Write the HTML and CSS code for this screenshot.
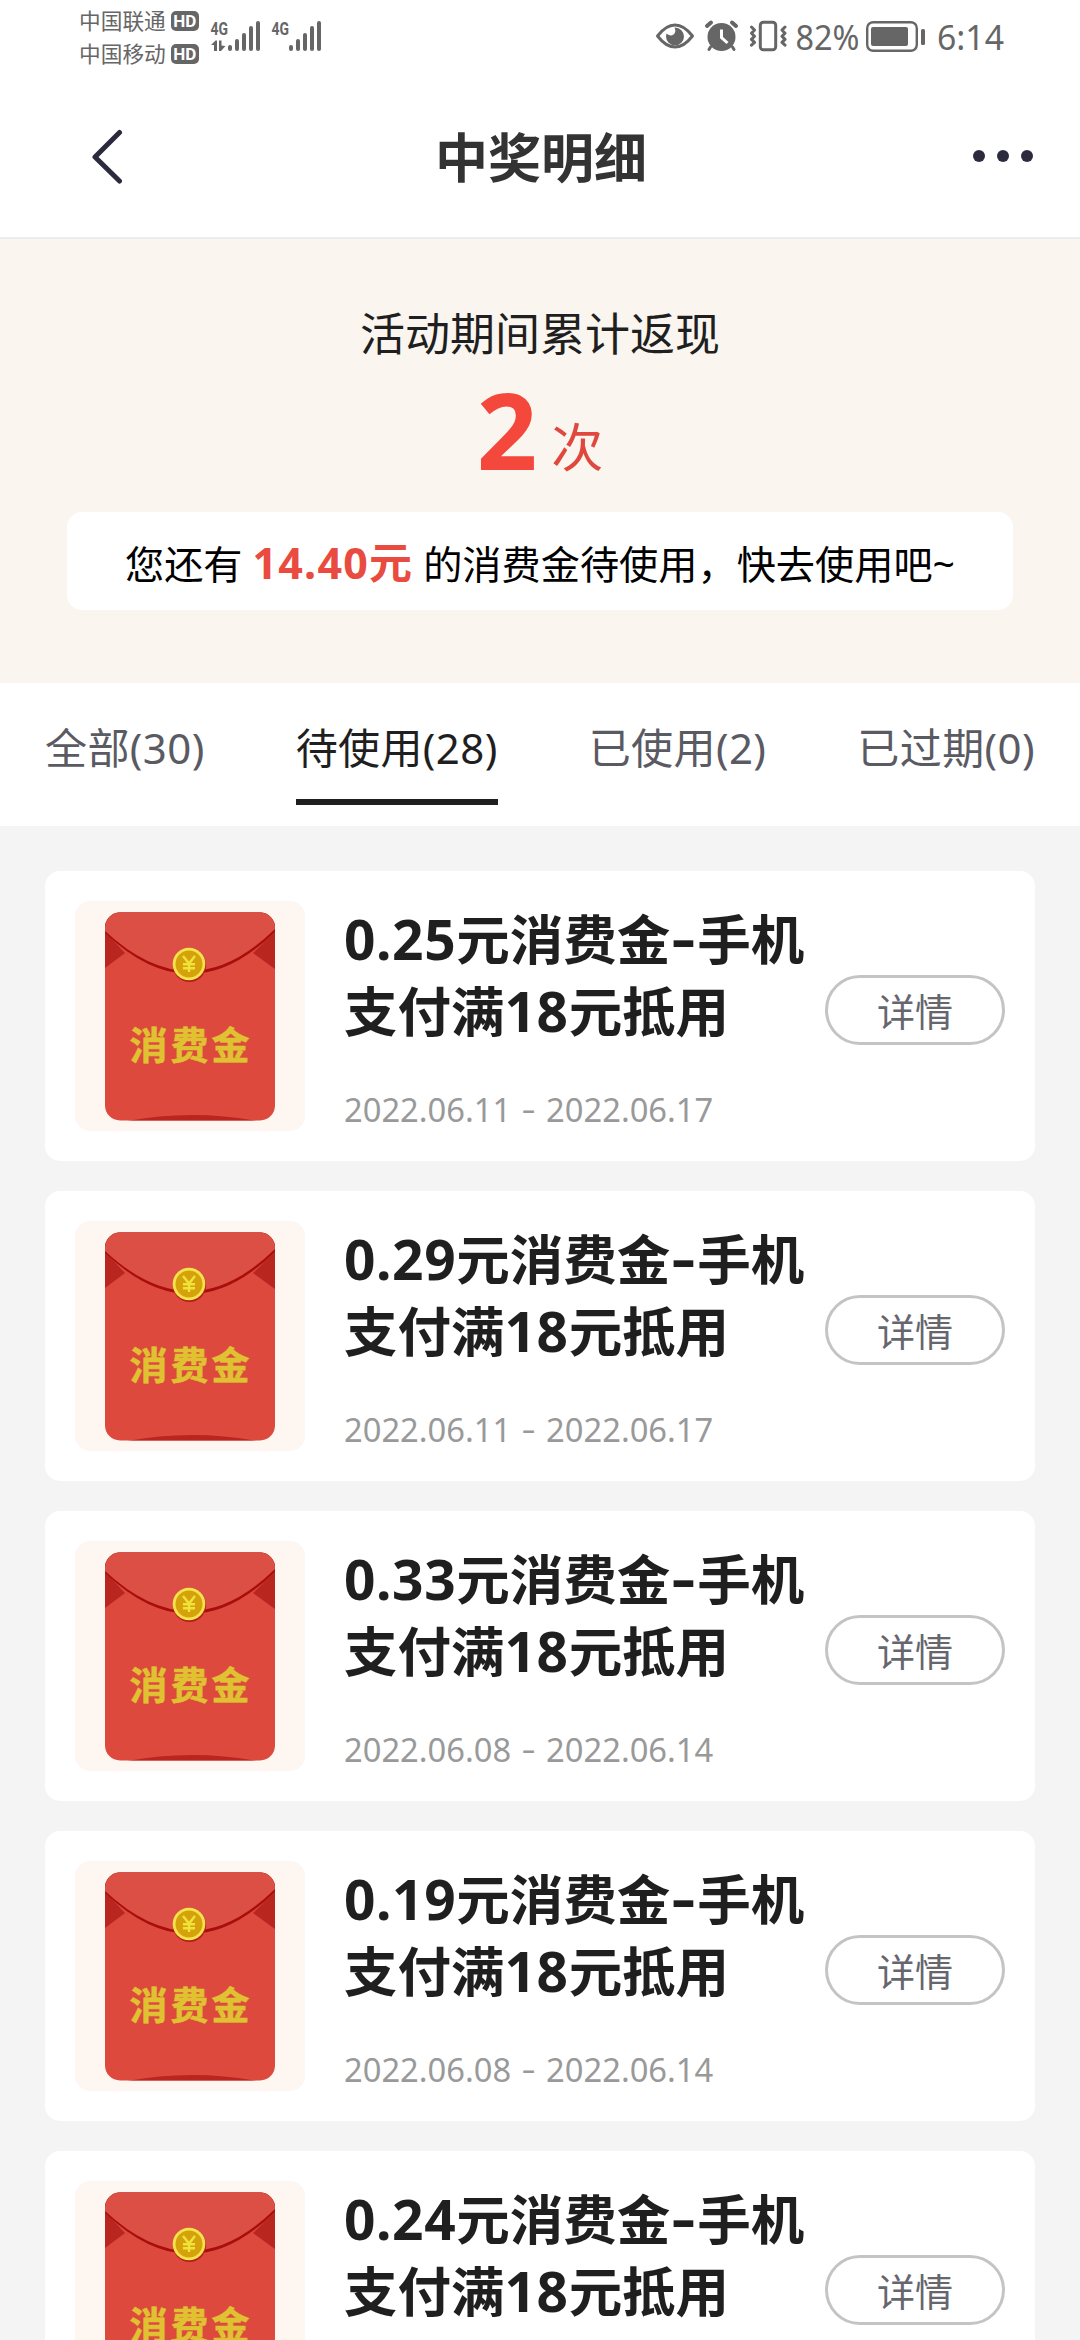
FILE: index.html
```html
<!DOCTYPE html>
<html lang="zh-CN">
<head>
<meta charset="utf-8">
<title>中奖明细</title>
<link rel="stylesheet" href="styles.css">
</head>
<body>
<svg class="defs" width="0" height="0" aria-hidden="true">
  <defs>
    <clipPath id="envelope-clip"><rect x="30" y="11.5" width="170" height="208" rx="15"/></clipPath>
    <symbol id="envelope" viewBox="0 0 230 230">
      <g clip-path="url(#envelope-clip)">
        <rect x="30" y="11" width="170" height="209" fill="#dd493d"/>
        <path d="M30 31L50 52L30 67ZM200 31L178 52L200 68Z" fill="#b9261f"/>
        <path d="M30 8V32Q73 73 115 73T200 31V8Z" fill="#a80f0c"/>
        <path d="M30 8V30Q73 70 115 70T200 28V8Z" fill="#dc4f44"/>
        <path d="M52 220Q117 208 182 220Z" fill="#b9261f"/>
      </g>
      <circle cx="114.500" cy="64.500" r="16.500" fill="#b02015"/>
      <circle cx="114" cy="63" r="16.300" fill="#f3e34d"/>
      <circle cx="114" cy="63" r="13.500" fill="#d5a20c"/>
      <path d="M108 55l6 7.500 6-7.500M114 62.500v8.500M108 63.300h12M108 67.300h12" fill="none" stroke="#f0e23c" stroke-width="2.400"/>
      <text class="envelope-text" x="54.500" y="157.500">消费金</text>
    </symbol>
  </defs>
</svg>

<div class="status">
  <div class="carriers">
    <div class="carrier">中国联通<span class="hd">HD</span></div>
    <div class="carrier">中国移动<span class="hd">HD</span></div>
  </div>
  <svg class="signals" width="114" height="75" viewBox="210 0 114 75">
    <g fill="#666">
      <text class="net" x="210.500" y="34.500" textLength="17.500" lengthAdjust="spacingAndGlyphs">4G</text>
      <text class="net" x="271.500" y="34.500" textLength="17.500" lengthAdjust="spacingAndGlyphs">4G</text>
      <path d="M211 45l4.500-4.500h1.500V51h-3v-6zM219 40.500h2.500v5l4 .5-4.500 5h-2z"/>
      <rect x="228" y="45" width="4" height="6" rx="2"/><rect x="235" y="39" width="4" height="12" rx="2"/><rect x="242" y="33" width="4" height="18" rx="2"/><rect x="249" y="26" width="4" height="25" rx="2"/><rect x="256" y="21" width="4" height="30" rx="2"/>
      <rect x="289" y="45" width="4" height="6" rx="2"/><rect x="296" y="39" width="4" height="12" rx="2"/><rect x="303" y="33" width="4" height="18" rx="2"/><rect x="310" y="26" width="4" height="25" rx="2"/><rect x="317" y="21" width="4" height="30" rx="2"/>
    </g>
  </svg>
  <svg class="indicators" width="360" height="75" viewBox="650 0 360 75">
    <g fill="none" stroke="#666" stroke-width="3" stroke-linecap="round" stroke-linejoin="round">
      <path d="M657.500 36Q666 25 675 25T692.500 36Q684 47 675 47T657.500 36Z"/>
      <path d="M707 26l4-3.500M736 26l-4-3.500" stroke-width="4"/>
      <path d="M710.500 47l-1.500 2.500M732.500 47l1.500 2.500"/>
      <rect x="760.300" y="22.300" width="15.400" height="27.400" rx="3"/>
      <path d="M751.500 27l3 3-3 3.200 3 3-3 3.200 3 3-3 2.800M785 27l-3 3 3 3.200-3 3 3 3.200-3 3 3 2.800"/>
      <rect x="867.200" y="22.200" width="49.600" height="28.600" rx="6" stroke-width="2.400"/>
    </g>
    <g fill="#666">
      <path d="M675 27.500a9 9 0 1 1-9 9l.5-3q4 3.500 7 1t1-7z"/>
      <circle cx="721.500" cy="37" r="14"/>
      <rect x="871" y="27" width="37" height="19" rx="2"/>
      <rect x="921" y="29" width="4" height="16" rx="1.500"/>
      <text class="readout" x="795.500" y="50" textLength="64" lengthAdjust="spacingAndGlyphs">82%</text>
      <text class="readout" x="937" y="50" textLength="67" lengthAdjust="spacingAndGlyphs">6:14</text>
    </g>
    <path d="M721.500 29.500v8l6 5.500" fill="none" stroke="#fff" stroke-width="3"/>
  </svg>
</div>

<header class="nav">
  <svg class="back" width="36" height="60" viewBox="0 0 36 60"><path d="M32.500 6.500L8 31L32.500 55" fill="none" stroke="#2c2a3d" stroke-width="5" stroke-linecap="round" stroke-linejoin="round"/></svg>
  <h1>中奖明细</h1>
  <svg class="more" width="62" height="14" viewBox="0 0 62 14" fill="#2c2a3d"><circle cx="7" cy="7" r="6"/><circle cx="31" cy="7" r="6"/><circle cx="55" cy="7" r="6"/></svg>
</header>

<section class="banner">
  <p class="caption">活动期间累计返现</p>
  <p class="total"><strong>2</strong><span>次</span></p>
  <p class="notice">您还有<strong>14.40元</strong>的消费金待使用，快去使用吧~</p>
</section>

<nav class="tabs">
  <a class="tab">全部(30)</a>
  <a class="tab active">待使用(28)</a>
  <a class="tab">已使用(2)</a>
  <a class="tab">已过期(0)</a>
</nav>

<main class="list">
  <article class="card">
    <svg class="thumb"><use href="#envelope"/></svg>
    <div class="info"><h2><b>0.25</b>元消费金<i>-</i>手机<br>支付满<b>18</b>元抵用</h2><p class="date">2022.06.11<i>-</i>2022.06.17</p></div>
    <button class="detail">详情</button>
  </article>
  <article class="card">
    <svg class="thumb"><use href="#envelope"/></svg>
    <div class="info"><h2><b>0.29</b>元消费金<i>-</i>手机<br>支付满<b>18</b>元抵用</h2><p class="date">2022.06.11<i>-</i>2022.06.17</p></div>
    <button class="detail">详情</button>
  </article>
  <article class="card">
    <svg class="thumb"><use href="#envelope"/></svg>
    <div class="info"><h2><b>0.33</b>元消费金<i>-</i>手机<br>支付满<b>18</b>元抵用</h2><p class="date">2022.06.08<i>-</i>2022.06.14</p></div>
    <button class="detail">详情</button>
  </article>
  <article class="card">
    <svg class="thumb"><use href="#envelope"/></svg>
    <div class="info"><h2><b>0.19</b>元消费金<i>-</i>手机<br>支付满<b>18</b>元抵用</h2><p class="date">2022.06.08<i>-</i>2022.06.14</p></div>
    <button class="detail">详情</button>
  </article>
  <article class="card">
    <svg class="thumb"><use href="#envelope"/></svg>
    <div class="info"><h2><b>0.24</b>元消费金<i>-</i>手机<br>支付满<b>18</b>元抵用</h2></div>
    <button class="detail">详情</button>
  </article>
</main>
</body>
</html>
```
FILE: styles.css
```css
* { box-sizing: border-box; }
html { height: 2340px; overflow: hidden; }
body {
  margin: 0;
  width: 1080px;
  height: 2340px;
  overflow: hidden;
  display: flex;
  flex-direction: column;
  background: #f4f4f4;
  color: #1f1f1f;
  font-family: "Noto Sans", "Noto Sans CJK SC", sans-serif;
}
h1, h2, p { margin: 0; }
i { font-style: normal; display: inline-block; text-align: center; }
.defs { display: block; position: absolute; }
.status, .nav, .banner, .tabs { flex: none; }

.status { display: flex; height: 75px; padding-left: 79px; background: #fff; color: #666; }
.carriers { width: 131px; padding-top: 4px; }
.carrier { display: flex; align-items: center; height: 33px; font-size: 21.7px; line-height: 32px; font-weight: 400; white-space: nowrap; }
.hd {
  width: 28px; height: 20px; margin-left: 5px; border-radius: 5px;
  background: #666; color: #fff; text-align: center;
  font: bold 17px/20px "Roboto", sans-serif;
}
.net { font: bold 19px "Roboto", sans-serif; }
.indicators { margin-left: 326px; }
.readout { font: 400 34.500px "Noto Sans", sans-serif; }

.nav {
  display: grid; grid-template-columns: 1fr auto 1fr; align-items: center;
  height: 164px; padding: 0 46px 0 87px;
  background: #fff; border-bottom: 2px solid #ededed;
}
.nav svg { display: block; }
.more { justify-self: end; }
.nav h1 { margin-left: -39px; padding-top: 3px; font-size: 53px; line-height: 72px; font-weight: 700; color: #333; }

.banner { height: 444px; padding: 59px 67px 0; background: #faf5ee; text-align: center; }
.caption { font-size: 45px; line-height: 72px; }
.total { display: flex; justify-content: center; align-items: baseline; gap: 14px; height: 142px; line-height: 118px; color: #f4483c; }
.total strong { font-size: 106px; font-weight: 700; }
.total span { font-size: 52px; color: #e0483e; transform: translateY(-3px); }
.notice { height: 98px; border-radius: 15px; background: #fff; color: #000; font-size: 39.200px; line-height: 102px; white-space: nowrap; }
.notice strong { margin: 0 10px; font-size: 43px; letter-spacing: 1.200px; color: #e94b40; }

.tabs { display: flex; justify-content: space-between; height: 143px; padding: 0 45px; background: #fff; }
.tab { height: 122px; font-size: 42px; letter-spacing: .4px; line-height: 129px; color: #5a5a63; }
.tab.active { border-bottom: 6px solid #1f1f1f; color: #1f1f1f; }

.list { flex: 1; min-height: 0; overflow: hidden; display: flex; flex-direction: column; gap: 30px; padding: 45px 45px 0; }
.card { display: flex; align-items: flex-start; flex: none; height: 290px; padding: 30px; border-radius: 15px; background: #fff; }
.thumb { flex: none; width: 230px; height: 230px; border-radius: 15px; background: #fef6f1; }
.envelope-text { font: bold 38px "Noto Sans CJK SC", sans-serif; letter-spacing: 3px; fill: #dfc132; stroke: #dfc132; stroke-width: .6px; }
.info { flex: 1; padding: 3px 0 0 39px; white-space: nowrap; }
.info h2 { font-size: 53.500px; line-height: 72px; font-weight: 700; }
.info b { font-size: 55px; font-weight: 700; line-height: 1; letter-spacing: .6px; }
.info h2 i { width: 27px; line-height: 1; vertical-align: 2px; transform: scaleX(1.4); }
.date { margin-top: 42px; font-size: 32.700px; line-height: 40px; color: #999; }
.date i { width: 35px; line-height: 1; vertical-align: 1px; transform: scaleX(1.35); }
.detail {
  flex: none; width: 180px; height: 70px; margin-top: 74px; padding: 0;
  border: 3px solid #c4c4c4; border-radius: 35px; background: #fff;
  color: #66666f; font: 38px/62px "Noto Sans CJK SC", sans-serif;
}
```
